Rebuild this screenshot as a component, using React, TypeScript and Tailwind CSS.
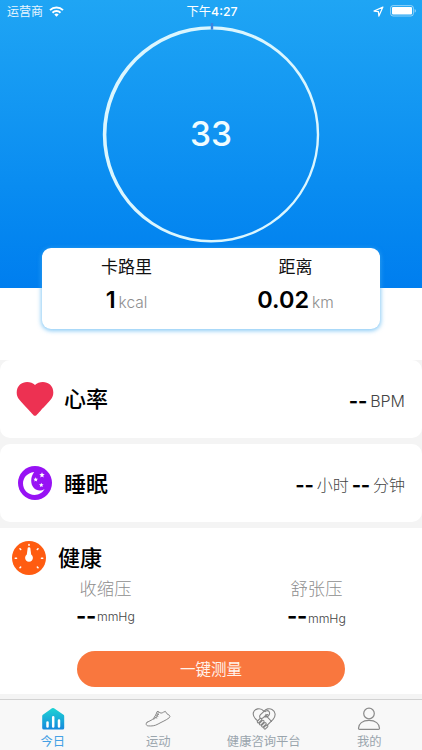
import React from "react";

const FONT = "font-['Inter','Noto_Sans_CJK_SC',sans-serif]";

function StatusBar() {
  return (
    <div className="flex h-[22px] items-center text-[12px] leading-[22px] text-white/90">
      <div className="flex flex-1 items-center gap-[6px] pl-[7px]">
        <span className="pt-[1px]">运营商</span>
        <svg width="15" height="11" viewBox="0 0 15 11" fill="none" stroke="white" strokeWidth="2">
          <path d="M1 4.1a9.3 9.3 0 0 1 13 0" />
          <path d="M3.5 6.7a5.7 5.7 0 0 1 8 0" />
          <path d="M7.5 10.7 5.3 8.5a3.2 3.2 0 0 1 4.4 0z" fill="white" stroke="none" />
        </svg>
      </div>
      <span className="pt-[1px] text-[12.3px] font-medium text-white">
        <span className="font-normal">下午</span>4:27
      </span>
      <div className="flex flex-1 items-center justify-end gap-[6px] pr-[5px]">
        <svg width="11" height="11" viewBox="0 0 11 11" fill="none" stroke="white" strokeWidth="1.2" strokeLinejoin="round">
          <path d="M9.9 1 1 5.1l4.4.6.5 4.4z" />
        </svg>
        <svg width="27" height="12" viewBox="0 0 27 12">
          <rect x="0.6" y="0.6" width="22.8" height="10.4" rx="2.5" fill="none" stroke="white" strokeOpacity="0.5" />
          <rect x="2" y="2" width="20" height="7.6" rx="1" fill="white" />
          <path d="M24.6 4c1.8.6 1.8 3.1 0 3.7z" fill="white" fillOpacity="0.5" />
        </svg>
      </div>
    </div>
  );
}

function Ring() {
  return (
    <div className="mx-auto mt-[1px] grid h-[222px] w-[218px] place-items-center">
      <svg className="col-start-1 row-start-1" width="218" height="222" viewBox="0 0 218 222">
        <path
          fill="#dbf6fe"
          fillRule="evenodd"
          d="M109 3.200a108.200 108.200 0 1 1 0 216.400a108.200 108.200 0 1 1 0-216.400zM109.600 6.500a105.200 105.200 0 1 0 0 210.400a105.200 105.200 0 1 0 0-210.400z"
        />
        <rect x="108.800" y="0" width="2.400" height="6.600" fill="#3b82df" />
      </svg>
      <span className="col-start-1 row-start-1 text-[33.500px] font-medium leading-[40px] text-[#f0fcff]">33</span>
    </div>
  );
}

function Metric({ label, value, unit }: { label: string; value: string; unit: string }) {
  return (
    <div className="flex flex-1 flex-col items-center">
      <span className="mt-[7px] text-[17px] leading-[24px] text-[#111]">{label}</span>
      <div className="mt-[5px] flex items-baseline gap-[3px] leading-[32px]">
        <span className="text-[23.500px] font-semibold text-black">{value}</span>
        <span className="text-[15.500px] font-light text-[#8e8e8e]">{unit}</span>
      </div>
    </div>
  );
}

const Dashes = () => <span className="text-[20px] font-bold leading-[24px] tracking-[-0.200px] text-black">--</span>;

function Heart() {
  return (
    <svg width="38" height="36" viewBox="0 0 38 36">
      <path fill="#ed3152" d="M19 4C15.500.4 8-.2 4 3.600-.1 7.500-.4 14 3.200 18.600c2 2.600 6.400 7 10 10.800 2.300 2.400 4.400 5.400 5.800 5.400s3.500-3 5.800-5.400c3.600-3.800 8-8.200 10-10.800 3.600-4.600 3.300-11.100-.8-15C30-.2 22.500.4 19 4z" />
    </svg>
  );
}

function Sleep() {
  const star = "M0-2.700.8-.9 2.700-.8 1.200.5 1.700 2.400 0 1.400-1.700 2.400-1.200.5-2.700-.8-.8-.9z";
  return (
    <svg width="34" height="34" viewBox="0 0 34 34">
      <circle cx="17" cy="17" r="17" fill="#9712f4" />
      <path fill="white" d="M16.200 5.900C8.700 6.700 5 12.200 5 17.500c0 6.500 5.200 11.400 11.500 11.400 4.400 0 8.100-2.200 10.100-5.900-6.600 4.100-13.400-.8-13.400-8.300 0-3.500 1.100-6.400 3-8.800z" />
      <g fill="white">
        <path transform="translate(24 9)" d={star} />
        <path transform="translate(17.700 13.500) scale(.85)" d={star} />
        <path transform="translate(23.300 19) scale(.85)" d={star} />
      </g>
    </svg>
  );
}

function Gauge() {
  return (
    <svg width="34" height="34" viewBox="0 0 34 34">
      <circle cx="17" cy="17" r="17" fill="#ff5c11" />
      <g stroke="white" strokeWidth="1.600" strokeLinecap="round">
        <path d="M17 3.600v.7M8 7.800l.7.7M26 7.800l-.7.7M3.300 17.200H4.500M29.500 17.200h1.200M8 26.700l.6-.6M26 26.700l-.6-.6" />
      </g>
      <path fill="white" d="M15.700 7.100c0-1.200 2.600-1.200 2.600 0l.9 6.500a3.900 3.900 0 1 1-4.400 0z" />
    </svg>
  );
}

function Pressure({ label, drop }: { label: string; drop: string }) {
  return (
    <div className="flex flex-1 flex-col items-center">
      <span className="text-[17.300px] font-light leading-[26px] text-[#8e8e8e]">{label}</span>
      <div className="mt-[1px] flex h-[26px] items-start gap-[1px]">
        <span className="text-[22px] font-bold leading-[26px] tracking-[-0.400px] text-black">--</span>
        <span className={`text-[12.300px] font-light leading-[20px] text-[#444] ${drop}`}>mmHg</span>
      </div>
    </div>
  );
}

function HomeIcon() {
  return (
    <svg width="24" height="24" viewBox="0 0 24 24">
      <defs>
        <linearGradient id="home" x1="0" y1="0" x2="0" y2="1">
          <stop stopColor="#1ed4d3" />
          <stop offset="1" stopColor="#1588dd" />
        </linearGradient>
      </defs>
      <path fill="url(#home)" d="M11 1.300q1-.8 2 0l9.500 6.500q.7.5.7 1.400V21q0 1.600-1.600 1.600H3Q1.200 22.600 1.200 21V9.200q0-.9.7-1.400z" />
      <path stroke="white" strokeWidth="2.500" strokeLinecap="round" d="M6.500 15.400v4M12.200 10.200v9.200M18 13.600v5.800" />
    </svg>
  );
}

function ShoeIcon() {
  return (
    <svg width="26" height="24" viewBox="0 0 26 24" fill="none" stroke="#888" strokeWidth="1" strokeLinejoin="round" strokeLinecap="round">
      <path d="M2 15.400 7.500 12.500C9.700 10 11.200 7.600 12 4.700q1.100-.9 1.900.2c1.300 1.500 3 1.500 4.500.3l2-.8q1.100 2.800 4 3.900 1.100 1.400-.1 2.400c-3.200 2.600-7.400 4.100-11.200 6.300-3.200 1.900-6.500 2.200-9.900 1.900C.8 18.700.6 16.400 2 15.400z" />
      <path d="M8.300 12.300c2.700-.5 4.600-3.600 5-6.700M9.700 10.300l2.200.7M10.800 8.500l2.100.8M11.700 6.900l2 .7" strokeWidth=".9" />
    </svg>
  );
}

function CareIcon() {
  return (
    <svg width="24" height="24" viewBox="0 0 24 24" fill="none" stroke="#858585" strokeWidth="1.100" strokeLinecap="round" strokeLinejoin="round">
      <path d="M5.400 13.700 3.200 11.500C-.4 7.500 1.300 2.700 5.600 1.900c2.700-.5 4.900.5 6.400 2.400 1.900-2.500 5.400-3.300 8-1.900 4 2.200 3.900 6.700 1.100 9.900l-6.300 6.400" />
      <path d="M12 4.300 8.500 7.700c-1 1-1.200 2.300-.4 3.100.9.8 2.300.7 3.200-.2l2.400-2.200 5.800 5.900M12.400 9.600l1.900.3c2.700-.4 4.300-3.400 2.700-5.500-.9-1-3-1-4 .2M15.800 7.600c-.7.4-1.400.2-2-.3" />
      <path d="m5.600 14 2.300-2.300c1-.9 2.500.5 1.600 1.500l-2.300 2.300c-1 1-2.600-.5-1.600-1.500zM7.700 16.100l2.500-2.500c1-.9 2.500.5 1.600 1.500l-2.500 2.500c-1 1-2.600-.5-1.600-1.500zM9.900 18.200l2.400-2.400c1-.9 2.500.5 1.600 1.500l-2.400 2.400c-1 1-2.600-.5-1.600-1.500zM12.100 20.200l1.900-1.900c1-.9 2.500.5 1.600 1.500l-1.900 1.900c-1 1-2.600-.5-1.600-1.500z" />
    </svg>
  );
}

function UserIcon() {
  return (
    <svg width="24" height="24" viewBox="0 0 24 24" fill="none" stroke="#8a8a8a" strokeWidth="1.200">
      <circle cx="12" cy="6.500" r="5.300" />
      <path d="M1.500 21.300c0-4.500 4-8 10.500-8s10.500 3.500 10.500 8q0 1.100-1.100 1.100H2.600q-1.100 0-1.100-1.100z" />
    </svg>
  );
}

function Tab({ icon, label, active = false }: { icon: React.ReactNode; label: string; active?: boolean }) {
  return (
    <div className="flex flex-1 flex-col items-center pt-[7px]">
      {icon}
      <span className={`mt-[3px] whitespace-nowrap text-[12.300px] leading-[16px] ${active ? "text-[#45a1e5]" : "text-[#9aa5ad]"}`}>{label}</span>
    </div>
  );
}

export default function App() {
  return (
    <div className={`${FONT} flex h-[750px] w-[422px] flex-col overflow-hidden bg-white`}>
      <header className="h-[288px] shrink-0 bg-linear-to-b from-[#1fa5f4] to-[#007eef]">
        <StatusBar />
        <Ring />
      </header>

      <section className="relative mx-auto -mt-[40px] flex h-[81px] w-[338px] shrink-0 rounded-[9px] bg-white shadow-[0_1px_4px_1px_rgba(65,170,240,0.6)]">
        <Metric label="卡路里" value="1" unit="kcal" />
        <Metric label="距离" value="0.02" unit="km" />
      </section>

      <main className="mt-[31px] flex h-[339px] shrink-0 flex-col gap-[6px] bg-[#f4f4f4]">
        <section className="flex h-[78px] shrink-0 items-center rounded-[10px] bg-white pl-[16px] pr-[17px]">
          <Heart />
          <h2 className="ml-[10px] flex-1 text-[22px] font-medium leading-[30px] text-black">心率</h2>
          <div className="flex items-center gap-[3px] pt-[4px]">
            <Dashes />
            <span className="text-[16px] font-light text-[#444]">BPM</span>
          </div>
        </section>

        <section className="flex h-[78px] shrink-0 items-center rounded-[10px] bg-white pl-[18px] pr-[17px]">
          <Sleep />
          <h2 className="ml-[12px] flex-1 pt-[1px] text-[22px] font-medium leading-[30px] text-black">睡眠</h2>
          <div className="flex items-center gap-[3px] pt-[4px]">
            <Dashes />
            <span className="text-[16px] font-light text-[#444]">小时</span>
            <Dashes />
            <span className="text-[16px] font-light text-[#444]">分钟</span>
          </div>
        </section>

        <section className="h-[166px] shrink-0 bg-white pt-[13px]">
          <div className="flex h-[34px] items-center pl-[12px]">
            <Gauge />
            <h2 className="ml-[12px] text-[22px] font-medium leading-[30px] text-black">健康</h2>
          </div>
          <div className="flex h-[76px] pt-[1px]">
            <Pressure label="收缩压" drop="mt-[4px]" />
            <Pressure label="舒张压" drop="mt-[6px]" />
          </div>
          <button className="mx-auto block h-[36px] w-[268px] rounded-full bg-[#f9773e] pt-[2px] text-[15.500px] leading-[34px] text-[#fff3ec]">一键测量</button>
        </section>
      </main>

      <nav className="flex h-[51px] shrink-0 border-t border-[#d2d2d2] bg-[#f8f8f8]">
        <Tab active icon={<HomeIcon />} label="今日" />
        <Tab icon={<ShoeIcon />} label="运动" />
        <Tab icon={<CareIcon />} label="健康咨询平台" />
        <Tab icon={<UserIcon />} label="我的" />
      </nav>
    </div>
  );
}
